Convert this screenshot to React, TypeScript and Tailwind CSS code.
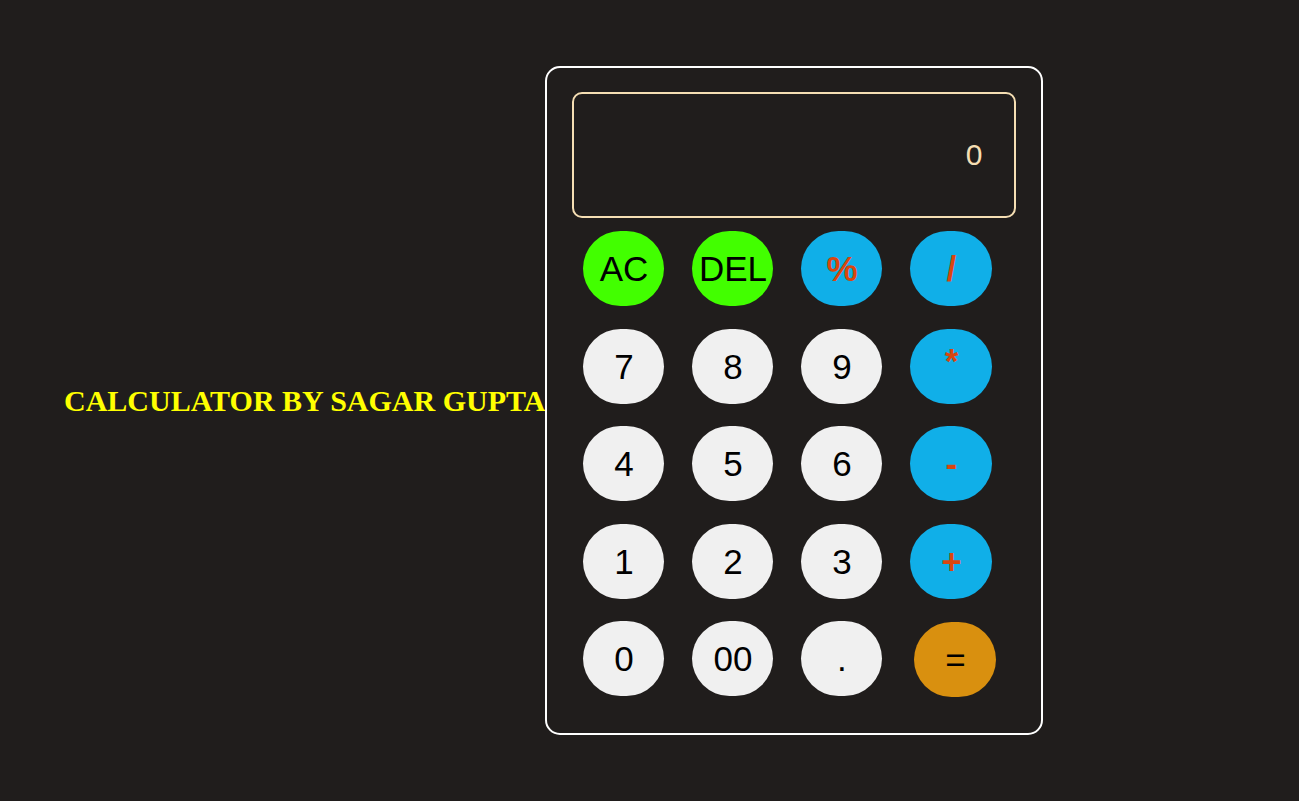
import React from "react";

type B = { label: string; kind: "green" | "blue" | "white" | "eq" };

const rows: B[][] = [
  [
    { label: "AC", kind: "green" },
    { label: "DEL", kind: "green" },
    { label: "%", kind: "blue" },
    { label: "/", kind: "blue" },
  ],
  [
    { label: "7", kind: "white" },
    { label: "8", kind: "white" },
    { label: "9", kind: "white" },
    { label: "*", kind: "blue" },
  ],
  [
    { label: "4", kind: "white" },
    { label: "5", kind: "white" },
    { label: "6", kind: "white" },
    { label: "-", kind: "blue" },
  ],
  [
    { label: "1", kind: "white" },
    { label: "2", kind: "white" },
    { label: "3", kind: "white" },
    { label: "+", kind: "blue" },
  ],
  [
    { label: "0", kind: "white" },
    { label: "00", kind: "white" },
    { label: ".", kind: "white" },
    { label: "=", kind: "eq" },
  ],
];

function Btn({ b, last }: { b: B; last: boolean }) {
  const base = `${last ? "w-[82px]" : "w-[81px]"} h-[75px] rounded-full flex items-center justify-center text-[35px] leading-none font-['Liberation_Sans',Arial,sans-serif]`;
  if (b.kind === "green")
    return <div className={`${base} bg-[#42ff00] text-black`}>{b.label}</div>;
  if (b.kind === "blue")
    return (
      <div className={`${base} bg-[#10afe8] text-[#d9460f] font-bold`}>
        <span className={b.label === "*" ? "-mt-[12px]" : ""}>{b.label}</span>
      </div>
    );
  if (b.kind === "eq")
    return (
      <div className={`${base} bg-[#d9900f] text-black ml-[4px] mt-[1px]`}>
        {b.label}
      </div>
    );
  return <div className={`${base} bg-[#f0f0f0] text-black`}>{b.label}</div>;
}

export default function App() {
  return (
    <div className="h-[801px] w-full bg-[#201d1c] flex items-center pl-[64px]">
      <h2 className="text-[#ffff00] font-bold text-[30px] font-['Liberation_Serif','Times_New_Roman',serif] whitespace-nowrap">
        CALCULATOR BY SAGAR GUPTA
      </h2>
      <div className="w-[498px] border-2 border-white rounded-[15px] px-[25px] pt-[24px] pb-[36px]">
        <div className="h-[126px] border-2 border-[#f5deb3] rounded-[10px] flex items-center justify-end pr-[32px]">
          <span className="text-[#f5deb3] text-[30px] leading-none font-['Liberation_Sans',Arial,sans-serif]">0</span>
        </div>
        <div className="mt-[13px] pl-[11px] flex flex-col gap-y-[22.5px]">
          {rows.map((r, i) => (
            <div key={i} className="flex gap-x-[28px]">
              {r.map((b, j) => (
                <Btn key={b.label} b={b} last={j === 3} />
              ))}
            </div>
          ))}
        </div>
      </div>
    </div>
  );
}
